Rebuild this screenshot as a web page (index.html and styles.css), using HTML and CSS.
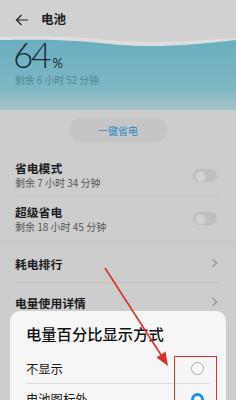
FILE: index.html
```html
<!DOCTYPE html>
<html lang="zh">
<head>
<meta charset="utf-8">
<link rel="stylesheet" href="styles.css">
</head>
<body>
<div class="page">
  <header class="hero">
    <svg class="wave" width="236" height="110" viewBox="0 0 236 110" preserveAspectRatio="none">
      <defs>
        <linearGradient id="tg" x1="0" y1="0" x2="0" y2="1">
          <stop offset="0" stop-color="#6aaebf"/>
          <stop offset="0.7" stop-color="#7db7c5"/>
          <stop offset="1" stop-color="#a9c3ca"/>
        </linearGradient>
      </defs>
      <path d="M0 37 C40 36 70 36 110 40 C150 44 190 41 236 38 L236 110 L0 110 Z" fill="#e2e4e4" opacity="0.7"/>
      <path d="M0 40 C50 39 80 40 120 45 C160 48 200 44 236 40 L236 110 L0 110 Z" fill="url(#tg)"/>
    </svg>
    <div class="topbar">
      <svg class="back" width="14" height="12" viewBox="0 0 14 12"><path d="M13 6H1.5M6.5 1L1.5 6l5 5" fill="none" stroke="#222" stroke-width="1.2"/></svg>
      <span class="title">电池</span>
    </div>
    <div class="level"><span class="num">64</span><span class="pct">%</span></div>
    <div class="remain">剩余 6 小时 52 分钟</div>
  </header>

  <div class="action"><span class="pill">一键省电</span></div>

  <section class="list">
    <div class="row two">
      <div class="text"><div class="name">省电模式</div><div class="sub">剩余 7 小时 34 分钟</div></div>
      <span class="toggle"></span>
    </div>
    <div class="row two">
      <div class="text"><div class="name">超级省电</div><div class="sub">剩余 18 小时 45 分钟</div></div>
      <span class="toggle"></span>
    </div>
  </section>
  <section class="list second">
    <div class="row one"><div class="name">耗电排行</div><span class="chev"></span></div>
    <div class="row one"><div class="name">电量使用详情</div><span class="chev"></span></div>
  </section>

  <div class="dialog">
    <div class="dtitle">电量百分比显示方式</div>
    <div class="opt first"><span>不显示</span><span class="radio"></span></div>
    <div class="opt last"><span>电池图标外</span><span class="radio on"></span></div>
  </div>

  <div class="mark"></div>
  <svg class="arrow" width="236" height="400" viewBox="0 0 236 400">
    <line x1="105" y1="268" x2="163" y2="358" stroke="#d8332a" stroke-width="1.6"/>
    <path d="M168 366 L156.5 357.5 L165.5 351.5 Z" fill="#d8332a"/>
  </svg>
</div>
</body>
</html>
```
FILE: styles.css
```css
* { box-sizing: border-box; }
html, body { margin: 0; padding: 0; }
body {
  width: 236px; height: 400px; overflow: hidden;
  background: #cdcdcd;
  font-family: "Noto Sans CJK SC", "Noto Sans", sans-serif;
  color: #1c1c1c;
}
.page { position: relative; width: 236px; height: 400px; overflow: hidden; }
.hero {
  position: relative; height: 108px;
  background: #d1d1d1;
}
.wave { position: absolute; left: 0; top: 0; }
.topbar {
  position: relative; height: 40px; display: flex; align-items: center;
  padding-left: 15px; gap: 12px; padding-bottom: 1px;
}
.back { display: block; }
.title { font-size: 12.5px; font-weight: 700; line-height: 1; }
.level {
  position: relative; display: flex; align-items: baseline;
  padding-left: 13px; height: 28px; margin-top: 0;
}
.num { font-family: "Lato", sans-serif; font-weight: 300; font-size: 35px; line-height: 28px; color: #1d2a30; letter-spacing: -2px; }
.pct { font-family: "Lato", sans-serif; font-size: 13px; font-weight: 400; margin-left: 3px; color: #1d2a30; }
.remain {
  position: relative; padding-left: 15px; margin-top: 6px;
  font-size: 9.8px; line-height: 12px; color: #4d8896;
}
.action { display: flex; justify-content: center; padding-top: 10px; }
.pill {
  width: 98px; height: 24px; border-radius: 12px; background: #c5c5c5;
  display: flex; align-items: center; justify-content: center;
  font-size: 10px; color: #2c86c6;
}
.list { margin-top: 12px; padding: 0 15px; }
.row { display: flex; align-items: center; justify-content: space-between; }
.row.two { height: 43px; border-bottom: 1px solid #c2c2c2; }
.row.two:last-child { border-bottom: none; }
.name { font-size: 11.8px; font-weight: 700; line-height: 15px; color: #1c1c1c; }
.sub { font-size: 10px; line-height: 14px; color: #555; margin-top: 1px; }
.toggle {
  width: 24px; height: 13px; border-radius: 7px; background: #c0c0c0;
  position: relative; margin-right: 4px; border: 1px solid #bcbcbc;
}
.toggle::after {
  content: ""; position: absolute; left: 1px; top: 1px; width: 9px; height: 9px;
  border-radius: 50%; background: #d3d3d3; border: 1px solid #c8c8c8;
}
.list.second { margin-top: 0; border-top: 4px solid #c9c9c9; padding-top: 0; }
.row.one { height: 39px; border-bottom: 1px solid #c2c2c2; }
.chev {
  width: 6px; height: 6px; border-right: 1px solid #8a8a8a; border-top: 1px solid #8a8a8a;
  transform: rotate(45deg); margin-right: 5px;
}
.dialog {
  position: absolute; left: 10px; top: 311px; width: 216px; height: 110px;
  background: #f6f6f6; border-radius: 10px; padding: 0 16px;
}
.dtitle { font-size: 15.3px; font-weight: 500; line-height: 20px; padding-top: 12px; color: #111; }
.opt {
  display: flex; align-items: center; justify-content: space-between;
  height: 30px; font-size: 12.3px; color: #1a1a1a; border-bottom: 1px solid #dcdcdc;
}
.opt.first { margin-top: 11px; }
.opt.last { border-bottom: none; }
.radio {
  width: 13px; height: 13px; border-radius: 50%; border: 1px solid #a9a9a9;
  margin-right: 6px; background: #fafafa;
}
.radio.on { border: 3.5px solid #1e8fe3; background: #fff; }
.mark {
  position: absolute; left: 174px; top: 356px; width: 43px; height: 60px;
  border: 1.5px solid #d8332a;
}
.arrow { position: absolute; left: 0; top: 0; pointer-events: none; }
```
